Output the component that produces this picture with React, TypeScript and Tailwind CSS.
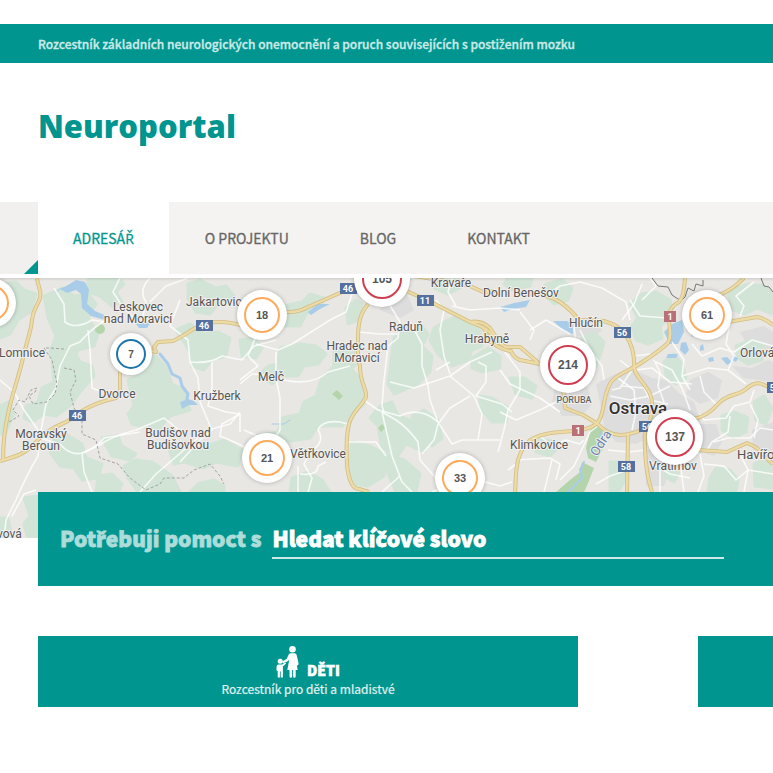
import React from "react";

const SANS = "font-['Noto_Sans_CJK_SC','Noto_Sans',sans-serif]";

const FORESTS = [
  "M0 284l16-2 8 8 12 4-6 18-12 8-8 14-10 4z",
  "M44 296l18-8 12 8 14-2 8 10-8 14 10 16-4 12-16 4-6 14-18 2-4-14 6-16-8-18z",
  "M60 346l14 4 6 12 12 4 2 10-14 16-8 12-16 12-12-2-12 8-8-4 2-12 12-4 4-14 12-6-2-20z",
  "M88 278l30 0 6 6-8 8 6 10-10 4-12-10-12-4z",
  "M128 380l12-6 2-18 14 0 10 12 6 16 12 6 6 20-20 6-12 14-26-6-4-10 6-8z",
  "M176 330l14-6 14 10 14-2 12 6-4 18-14 4-8 10-12-4-2-14z",
  "M0 406l8-4 6 12-8 18-6 2z",
  "M54 438l12-4 16 10 4 14 16 6-4 14-16 2-8-12-14-2-10-14z",
  "M102 438l16-2 4 10 14 8-6 6-18-4z",
  "M136 460l16 2 20 14 8 16-42 0-10-14-4-12z",
  "M168 446l18-4 8 8 30-10 18 10-4 16-22-4-12 6-20-6-10 2z",
  "M98 476l14-2 10 10-4 8-22 0z",
  "M24 498l14-2 0 42-10 0-4-14 6-8z",
  "M0 518l8 0 4 20-12 0z",
  "M188 284l12-4 16 8 10-2 8 10-14 6-10 12-14-2-8-14z",
  "M284 306l18-4 8-8 14 4-2 8-16 8-6 12-16 0z",
  "M280 348l20-4 16 2 10 8-8 10-14 2-6 10-18 0-8 8-14-8 10-10 10-2z",
  "M322 378l14-14 12 2 12 12 4 12 0 14-14 12-8 10-24 0-8 12-26 4-8 10-16-4-4-12 22-4 4-14 18-4 4-12 12-6z",
  "M334 352l22-2 2 12-10 10-14-2z",
  "M346 308l10-8 6 4-4 16-10 4z",
  "M394 338l10-12 10 4 6-6 8 10-6 12 10 10-2 16-12 12-24 10-6-10z",
  "M444 322l14-6 12 8 10 6 2 16-10 4-4 10-16 6-14-12-8-14 4-12z",
  "M380 406l12-4 6 14 18 6 12 20-4 10-18-8-8 12-16-8-4-22-8-8z",
  "M412 416l12-6 14 10 4 18-10 8-12-10z",
  "M352 442l18 4 18 10-4 20-16 10-14-2-6-16z",
  "M386 454l18 6 16 14-4 18-20 0-8-18z",
  "M472 358l16-10 12 8 0 12-18 4-10-4z",
  "M480 396l12 2 16 10-2 14-14 0-12-14z",
  "M432 278l26 0 2 10-12 6-14-6z",
  "M508 278l24 0-2 8-18 4-8-6z",
  "M546 284l16-4 10 8-4 12-14 4-10-10z",
  "M630 304l12-10 14-2 14 8 2 16-12 10 2 12-14 6-12-4-4-14 6-8z",
  "M582 338l12-6 10 10-4 14-6 14-10-4z",
  "M664 362l10-8 8 10 4 14-10 6-10-8z",
  "M728 292l20-8 16 2 9 8 0 20-16-6-12 6-12-4z",
  "M736 346l16-6 12 6-2 14-14 4-10-6z",
  "M722 416l12-4 14 6-2 14-12 6-12-8z",
  "M754 402l10-6 8 12-6 16-10-4z",
  "M666 452l12-2 4 16-8 16-10-6z",
  "M716 468l14 2 8 10-2 12-28 0 2-14z",
  "M754 464l19-8 0 32-18-2z",
  "M610 462l12 0 4 16-8 14-8 0z",
  "M510 378l14 0 12 8-4 12-16-4z",
  "M536 440l14 0 8 8-8 8-14-4z",
  "M240 340l14-2 8 10-6 10-14-2z",
  "M190 492l8-8 16-4 10 6 0 6z",
  "M292 478l16-6 14 8 8 12-40 0z",
];

const TOWNS = [
  "M596 384l18-10 20-4 18 8 14 2 14 14 14 8 6 18-10 18-18 6-20-8-16 8-20-2-12-14-2-16z",
  "M556 382l18-2 14 8 4 16-10 12-20 0-10-14z",
  "M644 450l20-2 6 22-6 16-18 0z",
  "M690 380l18-8 14 8-4 18-18 6-14-10z",
  "M752 430l21-8 0 30-20-2z",
  "M732 366l20 2 16-8 5 2 0 20-30-4z",
  "M386 290l20 2 8 18-14 8-20-8z",
  "M572 320l18-2 12 12-12 10-16-6z",
  "M740 332l24-6 9 6 0 24-22-4z",
  "M700 424l16 0 6 18-8 14-14-4z",
];

const WATER = [
  "M60 289l8-4 8-5 9 2 4 8-2 14 8 7 12 5-2 4-14-4-9-8-1-14-5-4-9 3z",
  "M133 320l6 8 8 0 4-6-6-2-6 4z",
  "M500 307l14-4 16-3-4 7-14 2-8 3z",
  "M553 321l14 0 6 4 0 9-8-2z",
  "M664 332l8-8 10-4 2 12-6 12-8 0z",
  "M681 343l5-1 3 8-4 5-5-5z",
  "M690 332l4-2 3 5-5 2z",
  "M700 346l3-2 1 6-4 1z",
  "M708 358l5-1 1 4-5 1z",
  "M721 358l6-1 5 5-5 3z",
  "M733 356l5 2-2 4-4-2z",
  "M668 354l10 0-2 4-10 0z",
  "M308 312l10-8 12 0-10 5-9 6z",
  "M180 402l8-3 6 2 4 4-9 0-7 4z",
];

const YELLOW = [
  "M37 278C38 288 42 290 40 298C37 307 33 309 32 320C31 332 27 340 23 358C19 376 11 398 8 414C4 432 3 444 3 460",
  "M0 461C18 456 24 454 34 444C46 430 58 426 68 421C82 410 92 404 112 399Q120 398 120 390V366",
  "M148 350L156 352L154 347L158 342L173 341C188 334 195 326 207 323Q224 320 244 326",
  "M284 312Q298 313 308 307L342 292L362 286",
  "M368 304C360 314 358 322 358 340Q357 356 360 366C360 384 367 388 366 397C362 406 352 412 349 424C345 440 347 456 347 466C349 480 352 489 359 489L369 492",
  "M404 290L427 300L470 322L480 326Q490 330 498 342L506 347L520 347L540 364",
  "M470 322Q482 320 490 328L498 340",
  "M484 328L489 341Q504 351 511 351Q514 358 520 360L540 364",
  "M414 276L440 280L470 286L483 292L495 291",
  "M525 293Q548 294 560 302Q574 312 578 320L604 321Q620 326 625 334Q635 348 634 366C634 376 646 384 650 394C654 404 652 414 650 420",
  "M685 278C684 288 684 296 679 302Q671 306 669 314C668 326 673 334 668 343Q658 352 644 361C630 371 618 373 611 382C602 396 605 414 598 422C588 434 560 430 546 434C526 438 522 448 518 460C515 474 516 482 515 492",
  "M563 388L565 408L583 415L598 424Q606 434 620 435Q640 434 648 424",
  "M628 434L627 492",
  "M645 426C644 452 646 474 652 492",
  "M694 419Q708 416 720 402C730 393 738 396 746 389Q756 380 764 385L773 389",
  "M698 450L727 452L747 443Q760 448 764 456L773 464",
  "M728 322L757 317Q764 318 773 325",
  "M716 296Q730 292 744 278",
];

const WHITE = [
  "M54 288L64 304L65 322Q76 330 92 320L106 322",
  "M120 278L113 292L122 306L136 320L150 322",
  "M150 278Q138 290 146 302L142 320",
  "M150 302L166 286L188 278",
  "M106 320Q92 328 80 342L70 346L60 366L56 388L46 404L40 436",
  "M0 380L14 392L24 410L38 430",
  "M88 330L90 350L92 388L102 392",
  "M40 438L38 456Q26 476 16 500L6 520L4 538",
  "M40 438L60 444Q70 456 82 453L84 472L92 492",
  "M84 453Q100 444 104 438L140 432",
  "M82 453L98 446Q112 436 136 430L164 418L184 434",
  "M198 438Q170 462 156 474L140 492",
  "M36 490L24 494L12 516",
  "M180 300L170 326L188 340L190 362L198 378L200 402",
  "M190 362Q210 364 222 356L242 360L254 346L276 340",
  "M212 362L212 388L208 406L226 412L240 414L240 432",
  "M200 402L212 430L200 440L180 462",
  "M240 414L222 424L220 436Q240 444 246 448",
  "M208 430L230 424L240 412",
  "M256 344L278 350L292 344L330 320L346 312L352 294",
  "M256 336L248 356L258 366L240 380",
  "M276 352L276 378L280 398L280 430L272 442",
  "M276 378Q310 388 328 372L350 366",
  "M240 384L252 374L276 376",
  "M318 430Q322 420 340 422L348 424",
  "M318 430Q326 442 310 452L304 464L312 478L308 492",
  "M298 466L298 492",
  "M300 474Q318 476 318 466L326 462",
  "M358 332L380 334L398 334",
  "M388 302L400 322L398 338L388 346L384 380L382 406L384 412",
  "M364 400L378 410L400 416Q420 406 438 422L452 444L462 440L500 440",
  "M382 412L388 438L392 456L402 482L412 492",
  "M382 412L396 420Q408 428 418 442L420 460L436 478",
  "M348 442L376 442L386 456",
  "M400 476L382 492",
  "M410 322L422 344L422 366L428 386L430 400L438 422",
  "M390 382L414 388L450 376L474 396L482 414L478 440",
  "M436 300L444 310L440 330L444 356L450 374",
  "M470 396L450 408L438 424L434 440L422 454",
  "M450 376L470 362L492 352",
  "M450 362L436 370",
  "M478 362L486 366L486 382L476 396",
  "M476 396L502 404L512 412",
  "M452 306L470 310L500 308L520 310",
  "M452 278L448 292L456 306",
  "M502 348L520 372L520 390L508 410L504 430L498 452",
  "M500 370L510 384L540 398L560 412",
  "M500 412L516 420L540 410L560 400",
  "M540 436L552 446L566 440L580 444L584 440",
  "M516 460L550 458L560 464L556 480",
  "M552 460L544 492",
  "M580 330L590 350L602 366L604 380",
  "M530 330L546 320L570 334",
  "M520 312L534 330L530 340",
  "M574 326L576 344L590 352",
  "M620 360L632 370L620 388L612 390",
  "M634 370L652 368L670 382L692 384",
  "M610 396L630 400L650 396L670 386",
  "M618 378L634 390L636 412L632 430",
  "M622 386L644 388L650 400L668 404",
  "M654 360L660 372L658 386L664 402",
  "M656 362L672 370L682 388L690 410",
  "M634 356L650 354",
  "M672 342L684 360L682 376L690 390",
  "M682 376L708 368L728 370L746 384",
  "M700 376L704 392L716 404",
  "M692 344L702 356L720 348L734 352L752 340L773 346",
  "M730 322L726 344L734 356L728 370",
  "M740 316L744 306L736 296L754 282",
  "M700 414L704 420L726 418L734 406L750 402L754 390",
  "M730 416L728 432L712 442L706 452",
  "M714 442L728 438L750 438L760 428L773 430",
  "M750 404L758 420L754 438",
  "M700 454L704 476L698 492",
  "M704 464L724 466L736 480L748 470L773 474",
  "M740 454L748 470L744 492",
  "M650 462L670 474L690 478",
  "M660 470L660 492",
  "M680 462L684 492",
  "M628 470L610 476L596 484",
  "M600 424L590 432L574 466L560 480",
  "M608 450L628 452L646 450",
  "M630 300L640 316L668 318",
  "M580 282L602 288L626 302L630 320",
  "M642 284L634 304L622 320",
  "M546 296L560 286L580 282",
  "M650 278L656 286L642 300",
  "M244 430L262 438",
  "M508 470L516 464",
  "M432 492L452 484",
  "M478 480L500 486L512 482",
];

const BORDERS = [
  "M64 349l-14-1-6 0M44 348l8 12 5 24-2 10-8 8-14 2-4-8 6-4 2-4-6 2-4 8-2 4-6-2-6 10 6 6-10 6",
  "M64 368l10 2 2 10-6 12 4 16 8 12 0 14 14 6 4 18 18 6 12 14 16 12 14-6 4-6 20 0 10-8 16-6 10 12 4 8",
];

type Label = { x: number; y: number; t: string[]; size?: number; weight?: number; start?: boolean; fill?: string };

const LABELS: Label[] = [
  { x: 138, y: 311, t: ["Leskovec", "nad Moravicí"] },
  { x: 186, y: 306, t: ["Jakartovice"], start: true },
  { x: -1, y: 357, t: ["Lomnice"], start: true },
  { x: 117, y: 398, t: ["Dvorce"] },
  { x: 217, y: 400, t: ["Kružberk"] },
  { x: 41, y: 438, t: ["Moravský", "Beroun"] },
  { x: 178, y: 437, t: ["Budišov nad", "Budišovkou"] },
  { x: -3, y: 538, t: ["vová"], start: true },
  { x: 271, y: 381, t: ["Melč"] },
  { x: 357, y: 350, t: ["Hradec nad", "Moravicí"] },
  { x: 406, y: 331, t: ["Raduň"] },
  { x: 451, y: 287, t: ["Kravaře"] },
  { x: 487, y: 343, t: ["Hrabyně"] },
  { x: 290, y: 458, t: ["Větřkovice"], start: true },
  { x: 521, y: 297, t: ["Dolní Benešov"] },
  { x: 586, y: 327, t: ["Hlučín"] },
  { x: 539, y: 449, t: ["Klimkovice"] },
  { x: 673, y: 470, t: ["Vratimov"] },
  { x: 740, y: 357, t: ["Orlová"], start: true },
  { x: 737, y: 459, t: ["Havířov"], start: true, size: 13 },
  { x: 574, y: 403, t: ["PORUBA"], size: 9, weight: 500, fill: "#666" },
  { x: 638, y: 414, t: ["Ostrava"], size: 17, weight: 500, fill: "#333" },
];

const SHIELDS = [
  { x: 204, y: 325, t: "46" },
  { x: 77, y: 415, t: "46" },
  { x: 348, y: 288, t: "46" },
  { x: 425, y: 300, t: "11" },
  { x: 622, y: 332, t: "56" },
  { x: 647, y: 426, t: "56" },
  { x: 626, y: 466, t: "58" },
  { x: 775, y: 387, t: "59" },
  { x: 670, y: 316, t: "1", red: true },
  { x: 578, y: 430, t: "1", red: true },
];

const PINS = [
  { n: "24", place: "left-[-34px] top-0", tone: "orange" },
  { n: "7", place: "left-[110px] top-[55px]", tone: "blue" },
  { n: "18", place: "left-[237px] top-3", tone: "orange" },
  { n: "105", place: "left-[354px] top-[-27px]", tone: "red" },
  { n: "21", place: "left-[242px] top-[155px]", tone: "orange" },
  { n: "33", place: "left-[435px] top-[175px]", tone: "orange" },
  { n: "61", place: "left-[682px] top-3", tone: "orange" },
  { n: "214", place: "left-[540px] top-[59px]", tone: "red" },
  { n: "137", place: "left-[647px] top-[131px]", tone: "red" },
];

const TONES: Record<string, { disc: string; ring: string }> = {
  orange: { disc: "size-[50px] text-[11px]", ring: "size-9 border-[#fdaa5c]" },
  blue: { disc: "size-[42px] text-[10px]", ring: "size-[30px] border-[#1c76ad]" },
  red: { disc: "size-14 text-[12px]", ring: "size-10 border-[#cf3f50]" },
};

function Czech({ children }: { children: string }) {
  return (
    <>
      {children.split(/([řžčŘŽČ])/).map((part, i) =>
        i % 2 ? (
          <span key={i} className="font-['Open_Sans','Noto_Sans',sans-serif] leading-none">{part}</span>
        ) : (
          part
        ),
      )}
    </>
  );
}

function MapDrawing() {
  return (
    <svg
      className="block h-full w-full"
      viewBox="0 278 773 260"
      preserveAspectRatio="xMinYMin slice"
      role="img"
      aria-label="Mapa okolí Ostravy"
    >
      <rect x="0" y="278" width="773" height="260" fill="#e9e7e3" />
      <g fill="#dddddd">{TOWNS.map((d) => <path key={d} d={d} />)}</g>
      <g fill="#d1e4d6" stroke="#d1e4d6" strokeWidth="3" strokeLinejoin="round">
        {FORESTS.map((d) => <path key={d} d={d} />)}
      </g>
      <g fill="#b4d5ab">
        <circle cx="100" cy="329" r="5" />
        <path d="M332 394l5-4 6 6-4 4z" />
        <path d="M378 428l4-4 3 4-4 4z" />
        <path d="M592 424l8 0 6 18-10 20-8-4-2-10z" />
        <path d="M582 462l12 6-8 20-2 4-28 0 14-12 10-8z" />
      </g>
      <g fill="#a9cde9">{WATER.map((d) => <path key={d} d={d} />)}</g>
      <g fill="none" stroke="#a9cde9" strokeLinejoin="round" strokeLinecap="round">
        <path d="M160 354l8 10 4 10 8 4 2 8 6 8-2 10" strokeWidth="3" />
        <path d="M576 484l-8 8M584 462l-4 8 2 8-6 6" strokeWidth="2" />
        <path d="M602 430l-8 24M272 424l12 0 6-4M56 292l6-4" strokeWidth="1" />
      </g>
      <g fill="none" stroke="#fff" strokeWidth="1.6" strokeOpacity="0.8" strokeLinejoin="round">
        {WHITE.map((d) => <path key={d} d={d} />)}
      </g>
      <g fill="none" stroke="#a3a3a3" strokeWidth="1" strokeDasharray="3 2">
        {BORDERS.map((d) => <path key={d} d={d} />)}
      </g>
      <g fill="none" stroke="#777" strokeWidth="1">
        <path d="M652 278l6 8 10 1 4 8 9 6 4-4 3-9 6 3 2-7 7 2 0-6M761 278l3 8 5 1 4 5" />
      </g>
      <g fill="none" stroke="#d3bd82" strokeWidth="4" strokeLinejoin="round">
        {YELLOW.map((d) => <path key={d} d={d} />)}
      </g>
      <g fill="none" stroke="#ecdba6" strokeWidth="2.4" strokeLinejoin="round">
        {YELLOW.map((d) => <path key={d} d={d} />)}
      </g>
      {SHIELDS.map((s) => (
        <g key={s.t + s.x}>
          <rect x={s.x - (s.red ? 6 : 8)} y={s.y - 5} width={s.red ? 12 : 17} height="11" fill={s.red ? "#b97078" : "#53709e"} />
          <text x={s.x} y={s.y + 4} textAnchor="middle" fontSize="9" fontWeight="700" fill="#fff" fontFamily="Roboto, sans-serif">
            {s.t}
          </text>
        </g>
      ))}
      <g fontFamily="Roboto, sans-serif" stroke="#f1f0ee" strokeWidth="2" strokeLinejoin="round" paintOrder="stroke">
        {LABELS.map((l) =>
          l.t.map((line, i) => (
            <text
              key={line + l.x}
              x={l.x}
              y={l.y + i * 12}
              fontSize={l.size ?? 12}
              fontWeight={l.weight ?? 400}
              fill={l.fill ?? "#555"}
              textAnchor={l.start ? "start" : "middle"}
            >
              {line}
            </text>
          )),
        )}
        <text x="597" y="457" fontSize="13" fill="#6d83ab" transform="rotate(-57 597 457)">
          Odra
        </text>
      </g>
    </svg>
  );
}

function FamilyIcon() {
  return (
    <svg className="h-8 w-6" viewBox="0 0 24 32" fill="#fff" aria-hidden="true">
      <circle cx="16.500" cy="3.300" r="3.300" />
      <path d="M14.500 7.200h4q1.600 0 2.100 1.600l1.900 8.200q.3 1.700-.7 2.200l-.9.200.8 4.600h-2v6.300q0 1.500-1.300 1.500t-1.300-1.500v-6.300h-1v6.300q0 1.500-1.300 1.500t-1.300-1.500v-6.300h-2.200l2-10.600-1.500 1.900-4.400 1.600q-1 .2-1.100-.6t.6-1.200l3.700-2.200 2-4.200q.6-1.500 1.900-1.500z" />
      <circle cx="4.200" cy="15.200" r="2.500" />
      <path d="M2.600 18.400h3.600l3-2.100.9 1.300-3.200 2.900v10.200q0 1.100-1.100 1.100t-1.100-1.100v-5.200h-.8v5.200q0 1.100-1.100 1.100t-1.100-1.100v-5.700q-1.200 0-1.200-1v-3.300q0-2.300 2.100-2.300z" />
    </svg>
  );
}

export default function App() {
  return (
    <div className={`min-h-screen overflow-x-hidden bg-white pt-6 ${SANS}`}>
      <div className="flex h-[39px] items-center bg-[#00968f] px-[38px]">
        <p className="text-[12px] leading-5 font-medium whitespace-nowrap text-[#cdeae8] [-webkit-text-stroke:0.3px_#cdeae8]">
          <Czech>Rozcestník základních neurologických onemocnění a poruch souvisejících s postižením mozku</Czech>
        </p>
      </div>

      <header className="flex h-[139px] items-start px-[38px] pt-[38px]">
        <a href="#" className="font-['Open_Sans',sans-serif] text-[31px] leading-[50px] font-extrabold text-[#00968f]">
          Neuroportal
        </a>
      </header>

      <nav className="flex h-[72px] bg-[#f4f3f1] text-[14px] whitespace-nowrap text-[#666] [-webkit-text-stroke:0.3px]">
        <span className="flex w-[38px] shrink-0 items-end justify-end bg-[#f1f0ee]">
          <svg className="size-[14px]" viewBox="0 0 14 14" aria-hidden="true">
            <path d="M14 0v14H0z" fill="#00968f" />
          </svg>
        </span>
        <a href="#" aria-current="page" className="flex items-center bg-white px-[35px] text-[#00968f]">
          <span><Czech>ADRESÁŘ</Czech></span>
        </a>
        <a href="#" className="flex items-center px-[36px]">O PROJEKTU</a>
        <a href="#" className="flex items-center px-[35px]">BLOG</a>
        <a href="#" className="flex items-center px-[36px]">KONTAKT</a>
      </nav>

      <section className="relative mt-1 h-[260px] overflow-hidden">
        <MapDrawing />
        <div className="absolute inset-x-0 top-0 h-[3px] bg-linear-to-b from-black/10 to-transparent" />
        {PINS.map((p) => (
          <button
            key={p.n}
            type="button"
            className={`absolute flex items-center justify-center rounded-full bg-white font-['Liberation_Sans',sans-serif] font-bold text-[#555] shadow-[0_0_4px_rgba(0,0,0,0.25)] ${p.place} ${TONES[p.tone].disc}`}
          >
            <span className={`flex items-center justify-center rounded-full border-2 ${TONES[p.tone].ring}`}>{p.n}</span>
          </button>
        ))}
      </section>

      <form className="relative -mt-[46px] ml-[38px] flex h-[94px] items-center gap-[11px] bg-[#00968f] pr-[49px] pl-[22px] text-[21px] font-black [-webkit-text-stroke:0.8px]">
        <label htmlFor="keyword" className="shrink-0 text-[#addcd9]">
          <Czech>Potřebuji pomoct s</Czech>
        </label>
        <div className="relative min-w-0 flex-1">
          <input
            id="keyword"
            type="text"
            placeholder=" "
            className="peer block h-10 w-full border-b-2 border-[#cdeae8] bg-transparent text-white outline-none"
          />
          <span className="pointer-events-none invisible absolute inset-0 leading-[38px] whitespace-nowrap text-white peer-placeholder-shown:visible">
            <Czech>Hledat klíčové slovo</Czech>
          </span>
        </div>
      </form>

      <main className="mt-[50px] flex gap-[120px] pl-[38px]">
        <a href="#" className="flex h-[71px] w-[540px] shrink-0 flex-col items-center bg-[#00968f] pt-[10px] text-white">
          <span className="flex items-end gap-[7px]">
            <FamilyIcon />
            <span className="text-[14px] leading-4 font-black [-webkit-text-stroke:0.6px]">DĚTI</span>
          </span>
          <span className="text-[12px] leading-[22px] text-[#e0f2f1] [-webkit-text-stroke:0.2px]">Rozcestník pro děti a mladistvé</span>
        </a>
        <a href="#" aria-label="Další rozcestník" className="h-[71px] w-[540px] shrink-0 bg-[#00968f]" />
      </main>
    </div>
  );
}
